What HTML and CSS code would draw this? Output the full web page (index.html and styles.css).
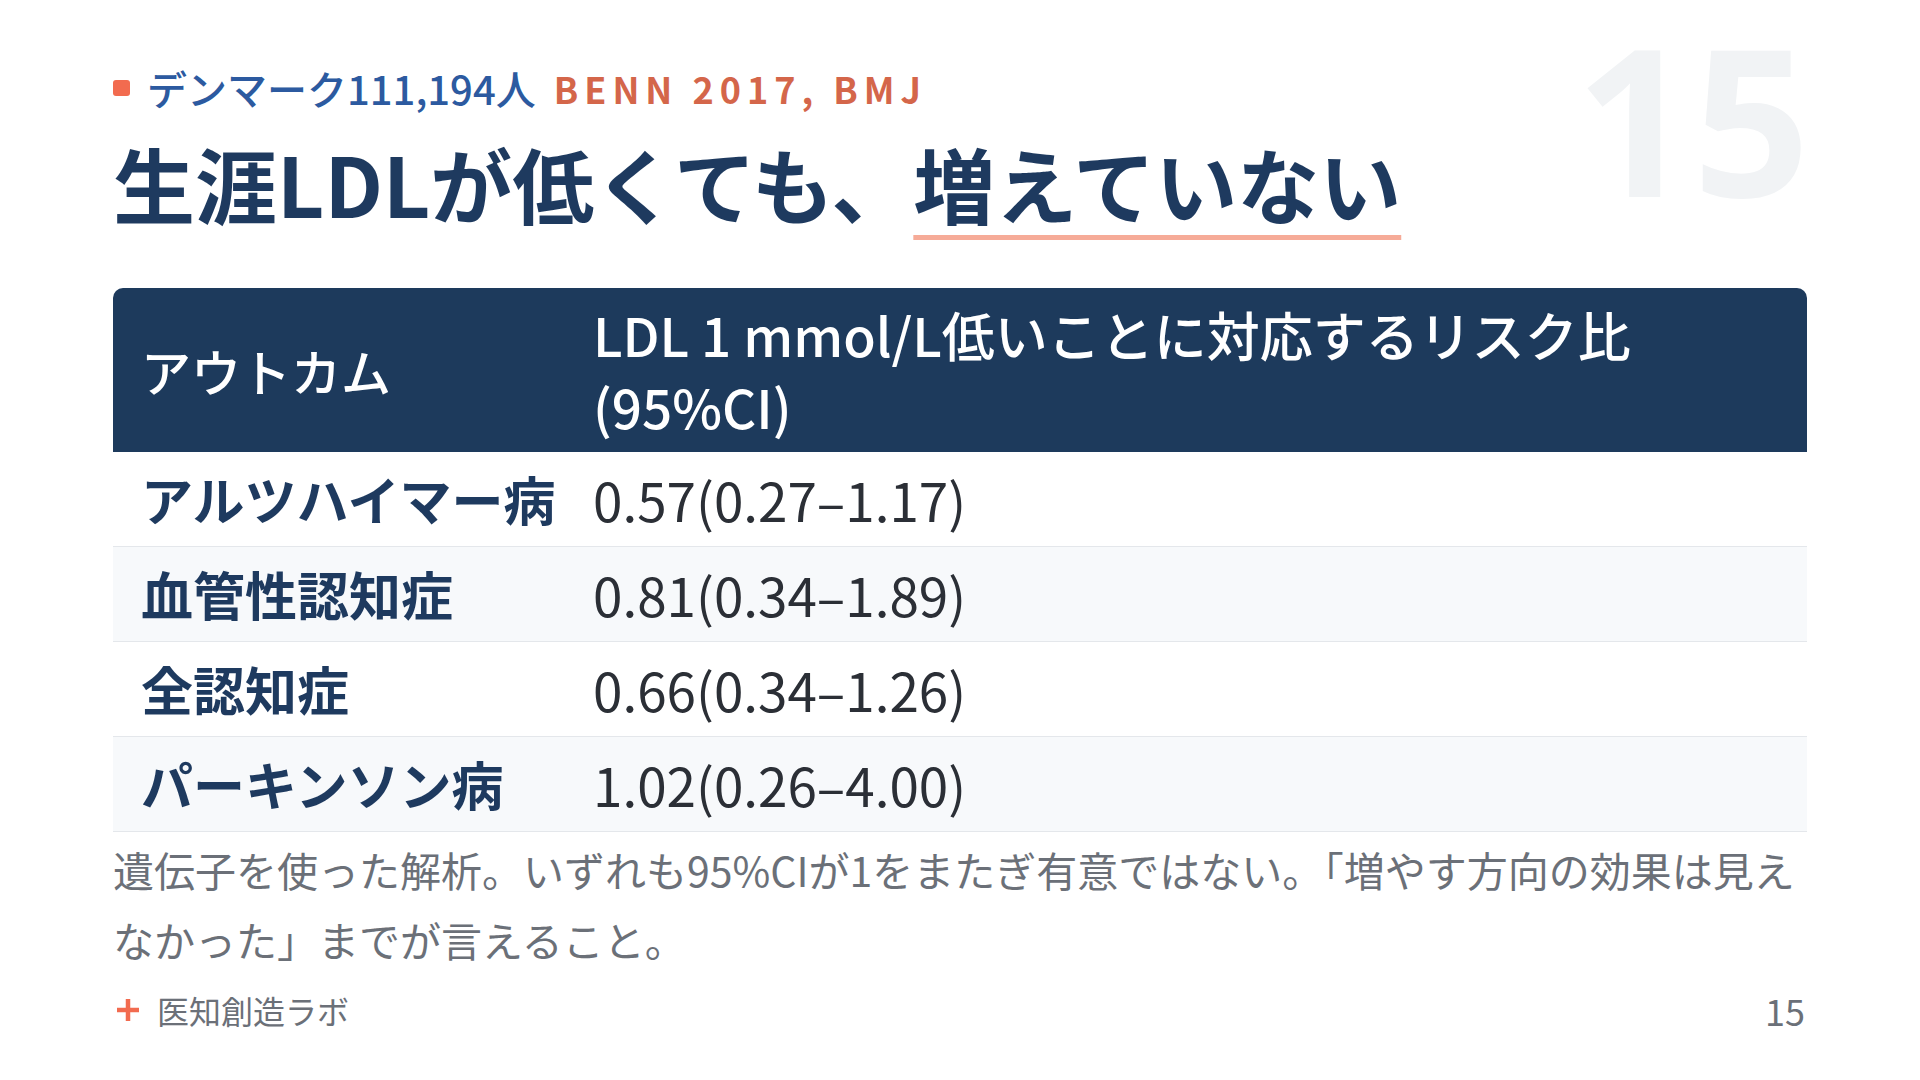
FILE: index.html
```html
<!DOCTYPE html>
<html lang="ja">
<head>
<meta charset="utf-8">
<title>15</title>
<link rel="stylesheet" href="styles.css">
</head>
<body>
<div class="slide">
  <div class="watermark">15</div>
  <div class="eyebrow">
    <span class="dot"></span>
    <span class="cohort">デンマーク111,194人</span>
    <span class="source">BENN 2017, BMJ</span>
  </div>
  <h1 class="title">生涯LDLが低くても、<span class="mark">増えていない</span></h1>
  <table class="data">
    <thead>
      <tr><th class="c1">アウトカム</th><th class="c2">LDL 1 mmol/L低いことに対応するリスク比<br>(95%CI)</th></tr>
    </thead>
    <tbody>
      <tr><td class="c1">アルツハイマー病</td><td class="c2">0.57(0.27–1.17)</td></tr>
      <tr class="alt"><td class="c1">血管性認知症</td><td class="c2">0.81(0.34–1.89)</td></tr>
      <tr><td class="c1">全認知症</td><td class="c2">0.66(0.34–1.26)</td></tr>
      <tr class="alt"><td class="c1">パーキンソン病</td><td class="c2">1.02(0.26–4.00)</td></tr>
    </tbody>
  </table>
  <p class="note">遺伝子を使った解析。いずれも95%CIが1をまたぎ有意ではない。「増やす方向の効果は見えなかった」までが言えること。</p>
  <div class="footer">
    <div class="brand">
      <svg class="plus" width="26" height="26" viewBox="0 0 26 26" aria-hidden="true">
        <path d="M13 2 V24 M2 13 H24" stroke="#f26b4f" stroke-width="4.5" fill="none"/>
      </svg>
      <span>医知創造ラボ</span>
    </div>
    <div class="page">15</div>
  </div>
</div>
</body>
</html>
```

FILE: styles.css
```css
* { box-sizing: border-box; }
html, body { margin: 0; padding: 0; background: #ffffff; }
body { font-family: "Noto Sans CJK JP", "Noto Sans", sans-serif; }
.slide {
  position: relative;
  width: 1920px;
  height: 1080px;
  padding: 62px 113px 0 113px;
  display: flex;
  flex-direction: column;
  overflow: hidden;
}
.watermark {
  position: absolute;
  top: 15px;
  right: 110px;
  font-family: "Noto Sans", sans-serif;
  font-size: 205px;
  font-weight: 700;
  line-height: 1;
  color: #f1f3f5;
}
.eyebrow {
  position: relative;
  display: flex;
  align-items: center;
  height: 52px;
}
.dot {
  width: 17px;
  height: 16px;
  border-radius: 3px;
  background: #f26b4f;
  margin-right: 17px;
}
.cohort {
  font-size: 40px;
  font-weight: 500;
  color: #2c5aa0;
  margin-right: 18px;
}
.source {
  font-size: 36px;
  font-weight: 700;
  color: #d4664a;
  letter-spacing: 6px;
}
.title {
  position: relative;
  margin: 14px 0 0 0;
  font-size: 82px;
  font-weight: 700;
  line-height: 110px;
  color: #1e3a5f;
}
.mark {
  text-decoration: underline;
  text-decoration-color: #f6ab98;
  text-decoration-thickness: 5px;
  text-underline-offset: 17px;
  text-decoration-skip-ink: none;
}
.data {
  position: relative;
  margin-top: 50px;
  width: 1694px;
  border-collapse: separate;
  border-spacing: 0;
  table-layout: fixed;
}
.data th {
  background: #1d3a5c;
  color: #ffffff;
  text-align: left;
  font-weight: 500;
  line-height: 72px;
  padding: 10px 28px;
  vertical-align: middle;
}
.data th.c1 { width: 452px; font-size: 50px; border-top-left-radius: 10px; }
.data th.c2 { font-size: 53px; border-top-right-radius: 10px; }
.data td {
  line-height: 72px;
  padding: 11px 28px;
  border-bottom: 1px solid #e4e7eb;
  white-space: nowrap;
}
.data td.c1 {
  font-size: 52px;
  font-weight: 700;
  color: #1e3a5f;
  padding-right: 0;
}
.data td.c2 {
  font-size: 53px;
  font-weight: 400;
  color: #2b2f36;
}
.data tr.alt td { background: #f7f9fb; }
.note {
  margin: 2px 0 0 0;
  font-size: 41px;
  line-height: 70px;
  color: #6b7078;
}
.footer {
  margin-top: 10px;
  display: flex;
  justify-content: space-between;
  align-items: center;
  font-size: 32px;
  color: #6b7078;
}
.brand { display: flex; align-items: center; }
.plus { margin: 0 16px 0 2px; }
.page { font-size: 36px; margin-right: 2px; }
```
